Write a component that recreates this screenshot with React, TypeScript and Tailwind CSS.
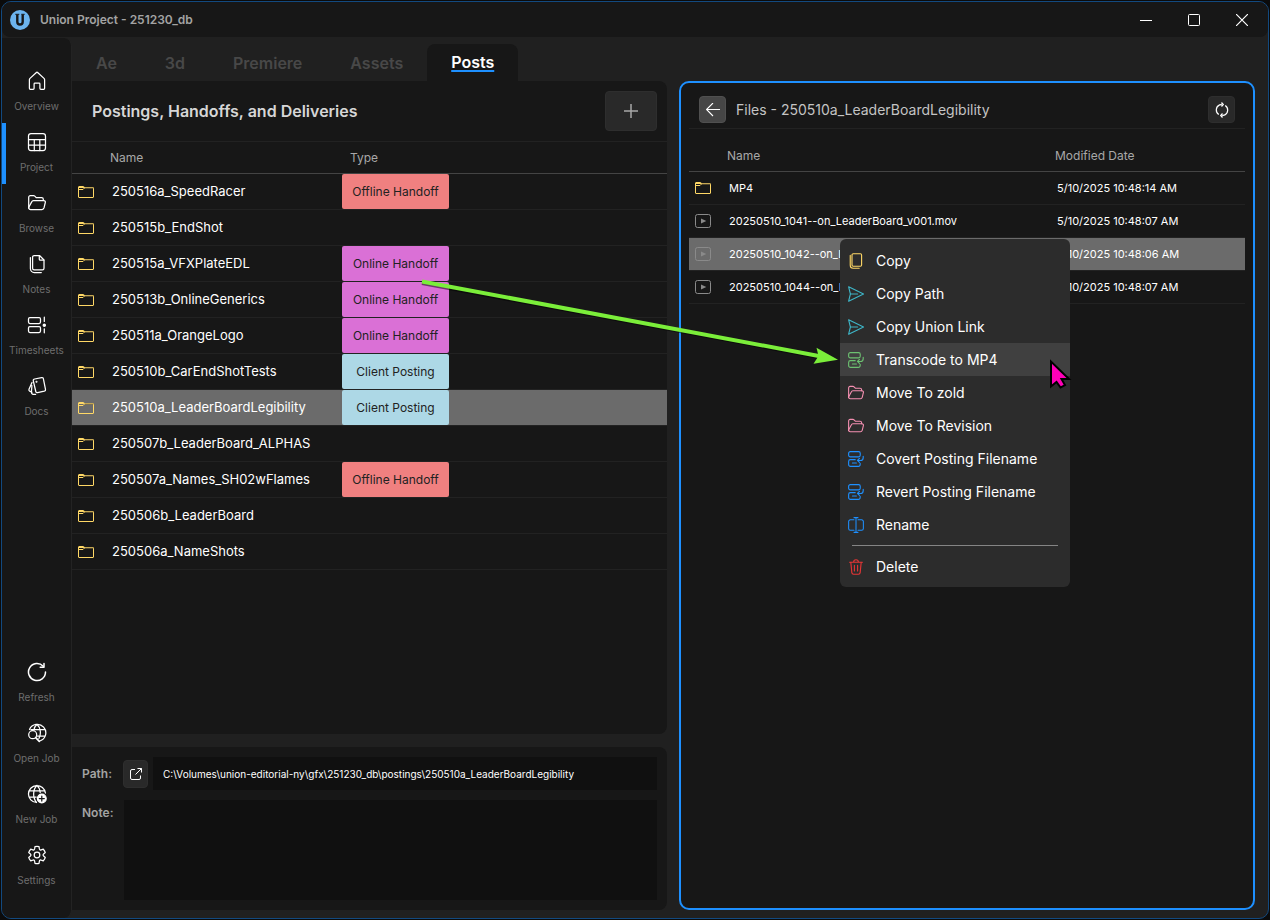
import type { ReactNode } from "react";

interface IconProps {
  className?: string;
}

interface Posting {
  name: string;
  type?: "Offline Handoff" | "Online Handoff" | "Client Posting";
  selected?: boolean;
}

interface FileRow {
  name: string;
  modified: string;
  folder?: boolean;
  selected?: boolean;
}

function Svg({ className = "size-5", viewBox = "0 0 20 20", children }: IconProps & { viewBox?: string; children: ReactNode }) {
  return (
    <svg
      viewBox={viewBox}
      fill="none"
      stroke="currentColor"
      strokeWidth="1.25"
      strokeLinecap="round"
      strokeLinejoin="round"
      className={className}
      aria-hidden="true"
    >
      {children}
    </svg>
  );
}

const HomeIcon = () => (
  <Svg>
    <path d="M9.1 1.7a1.3 1.3 0 0 1 1.8 0l6.1 5.700c.4.4.6.9.6 1.400v8.500a1 1 0 0 1-1 1h-2.700a1 1 0 0 1-1-1v-4.300a.8.8 0 0 0-.8-.8H7.900a.8.8 0 0 0-.8.8v4.300a1 1 0 0 1-1 1H3.400a1 1 0 0 1-1-1V8.800c0-.5.2-1 .6-1.400z" />
  </Svg>
);

const TableIcon = () => (
  <Svg>
    <rect x="1.5" y="1.5" width="17" height="17" rx="2.5" />
    <path d="M1.5 7.5h17M1.5 13h17M7.3 7.5v11M12.8 7.5v11" />
  </Svg>
);

const FolderOpenIcon = ({ className = "size-[18px]" }: IconProps) => (
  <Svg className={className} viewBox="1 1 18 18">
    <path d="M1.7 15V4.300c0-1 .7-1.700 1.700-1.700h3.200c.5 0 .9.2 1.200.5l1.400 1.500h5.400c1 0 1.700.7 1.700 1.700v1.100" />
    <path d="M4.700 8.900c.3-.9.9-1.400 1.800-1.400h10.200c1.200 0 1.900.9 1.600 2l-1.300 5.400c-.3 1-1 1.600-2 1.600H3.600c-1.300 0-2.100-1-1.800-2.200z" />
  </Svg>
);

const NotesIcon = () => (
  <Svg>
    <path d="M7.200 1.500h5.300L17 6v8.200c0 .9-.7 1.600-1.600 1.600H7.200c-.9 0-1.600-.7-1.600-1.600V3.100c0-.9.7-1.600 1.600-1.600z" />
    <path d="M12.300 1.700v3.500c0 .6.400 1 1 1h3.500M3.400 3.600v10.800c0 2.200 1.700 4.100 3.900 4.100h7" />
  </Svg>
);

const TimesheetIcon = () => (
  <Svg>
    <rect x="1.5" y="2.5" width="12" height="6" rx="1.4" />
    <rect x="1.5" y="11.5" width="12" height="6" rx="1.4" />
    <path d="M17.300 2.200v4.200M17.300 13.800v4" />
    <circle cx="17.3" cy="10.2" r="1.1" fill="currentColor" />
  </Svg>
);

const DocsIcon = () => (
  <Svg>
    <path d="m7.600 3 7-1.400c.9-.2 1.600.3 1.800 1.200l2.100 10.500c.2.9-.4 1.700-1.200 1.900l-6.700 1.500c-.9.2-1.600-.3-1.800-1.200L6.300 4.900C6.100 4 6.600 3.200 7.600 3z" />
    <path d="M5 6.500 2 13.200c-.3.8 0 1.500.7 1.900l2.300 1.200M4.900 9.700l-.5 6.400c0 1.300.7 2.200 1.900 2.300h2.300" />
    <circle cx="9.5" cy="5.8" r=".4" fill="currentColor" />
  </Svg>
);

const RefreshIcon = () => (
  <Svg>
    <path d="M16.200 4.200a8.500 8.500 0 1 0 2.300 5.800" strokeWidth="1.5" />
    <path d="M17 1.500v3.800h-3.800" strokeWidth="1.5" />
  </Svg>
);

const GlobeSearchIcon = () => (
  <Svg>
    <path d="M2.500 6.500A8.500 8.500 0 1 1 12.800 18M4 6.500h14M10.500 13h7.500M10 1.500C8.300 2.800 7.300 4.300 7 6.800M10 1.500c3.800 3 4.300 10 1.900 14" />
    <circle cx="5.7" cy="11.7" r="4" />
    <path d="m8.700 14.700 3.600 3.600" strokeWidth="1.7" />
  </Svg>
);

const GlobeAddIcon = () => (
  <Svg>
    <path d="M9.500 18.500A8.500 8.500 0 1 1 18.400 9M2.200 6.800h15.600M2.200 13h7M10 1.500C5.600 5.500 5.600 14 9.500 18.300M10 1.500c2 1.700 3 4.300 3.200 7" />
    <circle cx="14.8" cy="14.5" r="4.4" fill="currentColor" />
    <path d="M14.800 12v5M12.300 14.500h5" stroke="#171717" />
  </Svg>
);

const SettingsIcon = () => (
  <Svg>
    <circle cx="10" cy="10" r="2.8" />
    <path d="M8 1.700a8.600 8.600 0 0 1 4 0l.4 2.200c.2.9 1 1.300 1.800 1l2.100-.7a8.600 8.600 0 0 1 2 3.400l-1.700 1.400c-.7.6-.7 1.400 0 2l1.700 1.400a8.600 8.600 0 0 1-2 3.400l-2.100-.7c-.8-.3-1.600.1-1.800 1l-.4 2.200a8.600 8.600 0 0 1-4 0l-.4-2.200c-.2-.9-1-1.300-1.800-1l-2.100.7a8.600 8.600 0 0 1-2-3.400L3.400 11c.7-.6.7-1.400 0-2L1.700 7.600a8.600 8.600 0 0 1 2-3.400l2.100.7c.8.3 1.600-.1 1.800-1z" />
  </Svg>
);

const FolderIcon = () => (
  <svg viewBox="0 0 16 12" fill="none" stroke="#ffd866" className="h-3 w-4" aria-hidden="true">
    <rect x=".5" y="1.5" width="15" height="10" rx=".5" />
    <path d="M6 2h9.500" stroke="#8b7640" />
    <path d="M.5 3.500V1c0-.3.2-.5.5-.5h4.500c.3 0 .5.2.5.5v1.500l-1 1z" />
  </svg>
);

const VideoIcon = () => (
  <svg viewBox="0 0 16 14" fill="none" stroke="#8a8a8a" className="h-3.5 w-4" aria-hidden="true">
    <rect x=".5" y=".5" width="15" height="13" rx="2" />
    <path d="M6 4.500v5L11.300 7z" fill="#8a8a8a" stroke="none" />
  </svg>
);

const CopyIcon = () => (
  <Svg className="size-4 text-[#ffd866]">
    <rect x="5" y="1" width="12" height="15.5" rx="1.5" strokeWidth="1.4" />
    <path d="M2.800 3v12.300c0 2 1.500 3.700 3.500 3.700H14" strokeWidth="1.4" />
  </Svg>
);

const SendIcon = () => (
  <Svg className="size-4 text-[#3eb6c8]">
    <path d="M.8 1 19.400 10 .8 19 3 10zM3 10h9" strokeWidth="1.4" />
  </Svg>
);

// Two stacked blocks with an arrow returning into the lower one
const ConvertIcon = ({ className }: IconProps) => (
  <Svg className={className}>
    <rect x=".8" y=".8" width="14.5" height="6.5" rx="2" strokeWidth="1.4" />
    <path d="M9 10.800H3a2.200 2.200 0 0 0-2.200 2.200v4A2.200 2.200 0 0 0 3 19.200h10a2.200 2.200 0 0 0 2.200-2.200v-1.500M5.500 15h5" strokeWidth="1.4" />
    <path d="M19 6.500v1.800c0 2-1.500 3.500-3.500 3.500H12M14.300 9.300 11.800 11.800l2.500 2.500" strokeWidth="1.4" />
  </Svg>
);

const RenameIcon = () => (
  <Svg className="size-4 text-[#1e90ff]">
    <path d="M7.500 3.500H3A2.200 2.200 0 0 0 .8 5.700v8.600A2.200 2.200 0 0 0 3 16.500h4.500M12.500 3.500H17a2.200 2.200 0 0 1 2.200 2.200v8.600a2.200 2.200 0 0 1-2.200 2.200h-4.500M10 .8v18.400M7.500.8h5M7.500 19.200h5" strokeWidth="1.3" />
  </Svg>
);

const TrashIcon = () => (
  <Svg className="size-4 text-[#e53535]">
    <path d="M2 4h16M7 4c0-4 6-4 6 0M3.500 4l1.300 13c.1 1.200 1 2 2.200 2h6c1.200 0 2.100-.8 2.200-2l1.300-13M8 8v7M12 8v7" strokeWidth="1.4" />
  </Svg>
);

const mainNav = [
  { label: "Overview", icon: <HomeIcon /> },
  { label: "Project", icon: <TableIcon />, active: true },
  { label: "Browse", icon: <FolderOpenIcon /> },
  { label: "Notes", icon: <NotesIcon /> },
  { label: "Timesheets", icon: <TimesheetIcon /> },
  { label: "Docs", icon: <DocsIcon /> },
];

const footerNav = [
  { label: "Refresh", icon: <RefreshIcon /> },
  { label: "Open Job", icon: <GlobeSearchIcon /> },
  { label: "New Job", icon: <GlobeAddIcon /> },
  { label: "Settings", icon: <SettingsIcon /> },
];

const tabs = ["Ae", "3d", "Premiere", "Assets", "Posts"];

const postings: Posting[] = [
  { name: "250516a_SpeedRacer", type: "Offline Handoff" },
  { name: "250515b_EndShot" },
  { name: "250515a_VFXPlateEDL", type: "Online Handoff" },
  { name: "250513b_OnlineGenerics", type: "Online Handoff" },
  { name: "250511a_OrangeLogo", type: "Online Handoff" },
  { name: "250510b_CarEndShotTests", type: "Client Posting" },
  { name: "250510a_LeaderBoardLegibility", type: "Client Posting", selected: true },
  { name: "250507b_LeaderBoard_ALPHAS" },
  { name: "250507a_Names_SH02wFlames", type: "Offline Handoff" },
  { name: "250506b_LeaderBoard" },
  { name: "250506a_NameShots" },
];

const typeColors = {
  "Offline Handoff": "bg-[#f08080]",
  "Online Handoff": "bg-[#da70d6]",
  "Client Posting": "bg-[#add8e6]",
};

const files: FileRow[] = [
  { name: "MP4", modified: "5/10/2025 10:48:14 AM", folder: true },
  { name: "20250510_1041--on_LeaderBoard_v001.mov", modified: "5/10/2025 10:48:07 AM" },
  { name: "20250510_1042--on_LeaderBoard_v002.mov", modified: "5/10/2025 10:48:06 AM", selected: true },
  { name: "20250510_1044--on_LeaderBoard_v003.mov", modified: "5/10/2025 10:48:07 AM" },
];

const menuItems = [
  { label: "Copy", icon: <CopyIcon /> },
  { label: "Copy Path", icon: <SendIcon /> },
  { label: "Copy Union Link", icon: <SendIcon /> },
  { label: "Transcode to MP4", icon: <ConvertIcon className="size-4 text-[#6cc070]" />, active: true },
  { label: "Move To zold", icon: <FolderOpenIcon className="size-4 text-[#f48fb1]" /> },
  { label: "Move To Revision", icon: <FolderOpenIcon className="size-4 text-[#f48fb1]" /> },
  { label: "Covert Posting Filename", icon: <ConvertIcon className="size-4 text-[#1e90ff]" /> },
  { label: "Revert Posting Filename", icon: <ConvertIcon className="size-4 text-[#1e90ff]" /> },
  { label: "Rename", icon: <RenameIcon /> },
];

function TitleBar() {
  return (
    <header className="flex h-[35px] shrink-0 items-center rounded-b-lg bg-[#171717] pr-0.5 pl-2">
      <svg viewBox="0 0 20 20" className="size-5" aria-hidden="true">
        <circle cx="10" cy="10" r="10" fill="#6cb4ee" />
        <path d="M7.300 4.500v7.300a2.700 2.700 0 0 0 5.400 0V4.500" fill="none" stroke="#171717" strokeWidth="2.4" />
        <path d="M5.300 4.300h4M11.300 4.300h3.400" stroke="#171717" strokeWidth="1" />
      </svg>
      <h1 className="ml-2.5 text-xs font-semibold text-[#a3a3a3]">Union Project - 251230_db</h1>
      <div className="ml-auto flex h-full text-white">
        <button aria-label="Minimize" className="flex w-12 items-center justify-center">
          <svg viewBox="0 0 12 12" className="size-3" stroke="currentColor"><path d="M0 6.500h12" /></svg>
        </button>
        <button aria-label="Maximize" className="flex w-12 items-center justify-center">
          <svg viewBox="0 0 12 12" className="size-3" stroke="currentColor" fill="none"><rect x=".5" y=".5" width="11" height="11" rx="1" /></svg>
        </button>
        <button aria-label="Close" className="flex w-12 items-center justify-center">
          <svg viewBox="0 0 12 12" className="size-3" stroke="currentColor" strokeWidth="1.2"><path d="m0 0 12 12M12 0 0 12" /></svg>
        </button>
      </div>
    </header>
  );
}

function NavButton({ label, icon, active }: { label: string; icon: ReactNode; active?: boolean }) {
  return (
    <button
      className={`flex h-[61px] w-full flex-col items-center gap-[7px] border-l-4 pt-[9px] pr-1 ${
        active ? "border-[#1e90ff]" : "border-transparent"
      }`}
    >
      <span className="flex size-5 items-center justify-center text-white">{icon}</span>
      <span className="text-[10px] leading-4 whitespace-nowrap text-[#6e6e6e]">{label}</span>
    </button>
  );
}

function Sidebar() {
  return (
    <nav className="flex w-[70px] shrink-0 flex-col justify-between rounded-r-lg border-r border-[#232323] bg-[#171717] pt-6 pb-[21px]">
      <div>
        {mainNav.map((item) => (
          <NavButton key={item.label} {...item} />
        ))}
      </div>
      <div>
        {footerNav.map((item) => (
          <NavButton key={item.label} {...item} />
        ))}
      </div>
    </nav>
  );
}

function Tabs() {
  return (
    <div className="flex h-[43px] shrink-0 items-end">
      {tabs.map((tab) => (
        <button
          key={tab}
          className={`h-[37px] rounded-t-lg px-6 text-base font-semibold ${
            tab === "Posts"
              ? "bg-[#171717] pb-0.5 text-white underline decoration-[#1e90ff] decoration-2 underline-offset-2"
              : "text-[#484848]"
          }`}
        >
          {tab}
        </button>
      ))}
    </div>
  );
}

function PostingsPanel() {
  return (
    <section className="min-h-0 flex-1 rounded-r-lg bg-[#171717]">
      <div className="flex h-[61px] items-center justify-between border-b border-[#222222] pr-2.5 pl-5">
        <h2 className="text-base font-semibold text-[#d6d6d6]">Postings, Handoffs, and Deliveries</h2>
        <button
          aria-label="Add posting"
          className="flex h-10 w-[52px] items-center justify-center rounded-sm border border-[#2e2e2e] bg-[#292929] text-[#a8a8a8]"
        >
          <svg viewBox="0 0 14 14" className="size-3.5" stroke="currentColor" strokeWidth="1.5">
            <path d="M7 0v14M0 7h14" />
          </svg>
        </button>
      </div>
      <table className="w-full table-fixed border-separate border-spacing-0 text-left">
        <thead>
          <tr className="h-8 text-xs text-[#a8a8a8]">
            <th className="w-[270px] border-b border-[#444444] p-0 pl-[38px] font-normal">Name</th>
            <th className="border-b border-[#444444] p-0 pl-2 font-normal">Type</th>
          </tr>
        </thead>
        <tbody>
          {postings.map((row) => (
            <tr key={row.name} className={`h-9 ${row.selected ? "bg-[#6b6b6b]" : ""}`}>
              <td className="border-b border-[#222222] p-0">
                <div className="flex items-center gap-[18px] pl-1.5 text-[13px] leading-[21px] text-white">
                  <FolderIcon />
                  {row.name}
                </div>
              </td>
              <td className="border-b border-[#222222] p-0">
                {row.type && (
                  <span
                    className={`flex h-[35px] w-[107px] items-center justify-center rounded-xs text-xs text-[#222222] ${typeColors[row.type]}`}
                  >
                    {row.type}
                  </span>
                )}
              </td>
            </tr>
          ))}
        </tbody>
      </table>
    </section>
  );
}

function DetailsPanel() {
  return (
    <section className="flex flex-col gap-2.5 rounded-r-lg bg-[#171717] p-2.5 text-xs">
      <div className="flex items-center">
        <label htmlFor="path" className="w-[41px] font-semibold text-[#a3a3a3]">
          Path:
        </label>
        <button
          aria-label="Open path"
          className="flex h-7 w-[25px] items-center justify-center rounded-sm border border-[#2e2e2e] bg-[#292929] text-white"
        >
          <svg viewBox="0 0 12 12" className="size-3" fill="none" stroke="currentColor">
            <path d="M5 1.500H2A1.500 1.500 0 0 0 .5 3v7A1.500 1.500 0 0 0 2 11.500h7a1.500 1.500 0 0 0 1.500-1.500V7.500M7.500.5h4v4M11.500.5l-6 6" />
          </svg>
        </button>
        <input
          id="path"
          readOnly
          value="C:\Volumes\union-editorial-ny\gfx\251230_db\postings\250510a_LeaderBoardLegibility"
          className="ml-[5px] h-[33px] min-w-0 flex-1 bg-[#101010] px-2.5 text-[10px] text-white outline-none"
        />
      </div>
      <div className="flex">
        <label htmlFor="note" className="w-[42px] pt-[5px] font-semibold text-[#a3a3a3]">
          Note:
        </label>
        <textarea id="note" className="h-[100px] min-w-0 flex-1 resize-none bg-[#101010] p-2.5 text-white outline-none" />
      </div>
    </section>
  );
}

function ContextMenu() {
  return (
    <div role="menu" className="absolute top-[156px] left-[159px] w-[230px] rounded-md bg-[#2c2c2c] pt-[5px] pb-1 text-sm text-white">
      {menuItems.map((item) => (
        <button
          key={item.label}
          role="menuitem"
          className={`flex h-[33px] w-full items-center gap-3 pl-2 ${item.active ? "bg-[#404040]" : ""}`}
        >
          {item.icon}
          {item.label}
        </button>
      ))}
      <hr className="mx-3 my-1 border-[#858585]" />
      <button role="menuitem" className="flex h-[33px] w-full items-center gap-3 pl-2">
        <TrashIcon />
        Delete
      </button>
    </div>
  );
}

function FilesPanel() {
  return (
    <section className="relative rounded-[10px] border-2 border-[#1e90ff] bg-[#171717] px-2">
      <div className="flex h-[46px] items-end border-b border-[#222222] px-2.5 pb-[5px]">
        <button aria-label="Back" className="flex size-[27px] items-center justify-center rounded-sm border border-[#505050] bg-[#464646] text-white">
          <svg viewBox="0 0 14 14" className="size-3.5" fill="none" stroke="currentColor" strokeWidth="1.1">
            <path d="M14 6.500H.5M7 0 .5 6.500 7 13" />
          </svg>
        </button>
        <h2 className="ml-2.5 text-sm leading-[27px] text-[#c4c4c4]">Files - 250510a_LeaderBoardLegibility</h2>
        <button
          aria-label="Reload files"
          className="ml-auto flex size-[27px] items-center justify-center rounded-sm border border-[#2e2e2e] bg-[#292929] text-white"
        >
          <svg viewBox="0 0 14 16" className="h-4 w-3.5" fill="none" stroke="currentColor" strokeWidth="1.2">
            <path d="M4.500 2.900a5.500 5.500 0 0 0-.7 9.600M9.500 13.100a5.500 5.500 0 0 0 .7-9.600M4 3.200l2.800-.8M6.500.5l1.800 2-1.800 2M10 12.800l-2.800.8M7.500 11.500l-1.800 2 1.800 2" />
          </svg>
        </button>
      </div>
      <table className="w-full table-fixed border-separate border-spacing-0 text-left">
        <thead>
          <tr className="h-[43px] text-xs text-[#a8a8a8]">
            <th className="border-b border-[#444444] p-0 pt-3 pl-[38px] font-normal">Name</th>
            <th className="w-[190px] border-b border-[#444444] p-0 pt-3 font-normal">Modified Date</th>
          </tr>
        </thead>
        <tbody>
          {files.map((file) => (
            <tr key={file.name} className={`h-[33px] text-[11px] text-white ${file.selected ? "bg-[#6b6b6b]" : ""}`}>
              <td className="border-b border-[#222222] p-0">
                <div className="flex items-center gap-[18px] pl-1.5 whitespace-nowrap">
                  {file.folder ? <FolderIcon /> : <VideoIcon />}
                  {file.name}
                </div>
              </td>
              <td className="border-b border-[#222222] p-0 pl-0.5 whitespace-nowrap">{file.modified}</td>
            </tr>
          ))}
        </tbody>
      </table>
      <ContextMenu />
    </section>
  );
}

// Callout arrow and mouse pointer drawn above the window
function Annotation() {
  return (
    <svg className="pointer-events-none absolute top-0 left-0 h-[400px] w-[1100px]" viewBox="0 0 1100 400" aria-hidden="true">
      <path d="m422 283 397 74" stroke="#000000" strokeOpacity=".5" strokeWidth="4" />
      <path d="m422 281.500 398 74.700" stroke="#7bee3a" strokeWidth="4" />
      <path d="M838 359.800 813.500 363.700 818.500 356 816.500 347.700z" fill="#7bee3a" />
      <path d="M1051 361.500v25l5.500-4.500 4 5.500 4.500-2.500-3.500-6h7.500z" fill="#ff00b8" stroke="#000000" strokeWidth="2" />
    </svg>
  );
}

export default function App() {
  return (
    <div className="relative flex min-h-screen bg-[#0b0b0b] p-px font-[Inter,sans-serif]">
      <div className="flex flex-1 flex-col overflow-hidden rounded-[10px] border border-[#12497f] bg-[#202020]">
        <TitleBar />
        <div className="flex flex-1 pt-px">
          <Sidebar />
          <main className="flex min-w-0 flex-1 flex-col pr-[13px] pb-2">
            <Tabs />
            <div className="grid flex-1 grid-cols-[595fr_576fr] gap-3">
              <div className="flex min-w-0 flex-col gap-[13px]">
                <PostingsPanel />
                <DetailsPanel />
              </div>
              <FilesPanel />
            </div>
          </main>
        </div>
      </div>
      <Annotation />
    </div>
  );
}
